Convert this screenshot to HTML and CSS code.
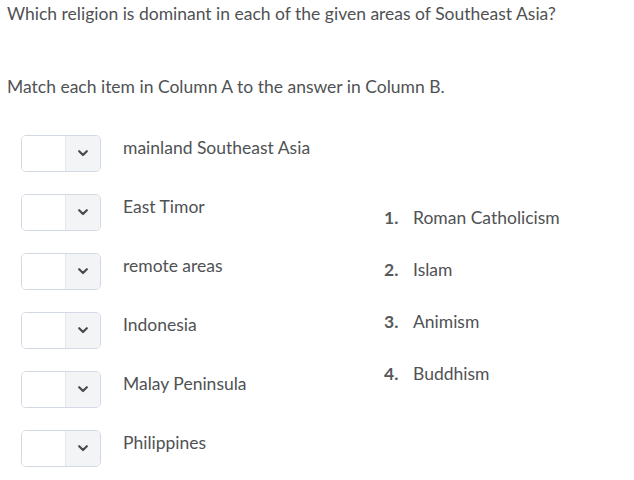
FILE: index.html
```html
<!DOCTYPE html>
<html>
<head>
<meta charset="utf-8">
<link rel="stylesheet" href="styles.css">
</head>
<body>
<div class="page">
  <p class="question">Which religion is dominant in each of the given areas of Southeast Asia?</p>
  <p class="instructions">Match each item in Column A to the answer in Column B.</p>
  <div class="match">
    <div class="col-a">
      <div class="row"><div class="select"><span class="value"></span><span class="arrow"><svg width="10" height="7" viewBox="0 0 10 7"><path d="M1.2 1.2 L5 5 L8.8 1.2" fill="none" stroke="#494c4e" stroke-width="2.2" stroke-linecap="round" stroke-linejoin="round"/></svg></span></div><span class="label">mainland Southeast Asia</span></div>
      <div class="row"><div class="select"><span class="value"></span><span class="arrow"><svg width="10" height="7" viewBox="0 0 10 7"><path d="M1.2 1.2 L5 5 L8.8 1.2" fill="none" stroke="#494c4e" stroke-width="2.2" stroke-linecap="round" stroke-linejoin="round"/></svg></span></div><span class="label">East Timor</span></div>
      <div class="row"><div class="select"><span class="value"></span><span class="arrow"><svg width="10" height="7" viewBox="0 0 10 7"><path d="M1.2 1.2 L5 5 L8.8 1.2" fill="none" stroke="#494c4e" stroke-width="2.2" stroke-linecap="round" stroke-linejoin="round"/></svg></span></div><span class="label">remote areas</span></div>
      <div class="row"><div class="select"><span class="value"></span><span class="arrow"><svg width="10" height="7" viewBox="0 0 10 7"><path d="M1.2 1.2 L5 5 L8.8 1.2" fill="none" stroke="#494c4e" stroke-width="2.2" stroke-linecap="round" stroke-linejoin="round"/></svg></span></div><span class="label">Indonesia</span></div>
      <div class="row"><div class="select"><span class="value"></span><span class="arrow"><svg width="10" height="7" viewBox="0 0 10 7"><path d="M1.2 1.2 L5 5 L8.8 1.2" fill="none" stroke="#494c4e" stroke-width="2.2" stroke-linecap="round" stroke-linejoin="round"/></svg></span></div><span class="label">Malay Peninsula</span></div>
      <div class="row"><div class="select"><span class="value"></span><span class="arrow"><svg width="10" height="7" viewBox="0 0 10 7"><path d="M1.2 1.2 L5 5 L8.8 1.2" fill="none" stroke="#494c4e" stroke-width="2.2" stroke-linecap="round" stroke-linejoin="round"/></svg></span></div><span class="label">Philippines</span></div>
    </div>
    <ol class="col-b">
      <li><span class="num">1.</span><span class="answer">Roman Catholicism</span></li>
      <li><span class="num">2.</span><span class="answer">Islam</span></li>
      <li><span class="num">3.</span><span class="answer">Animism</span></li>
      <li><span class="num">4.</span><span class="answer">Buddhism</span></li>
    </ol>
  </div>
</div>
</body>
</html>
```
FILE: styles.css
```css
html, body {
  margin: 0;
  padding: 0;
  background: #ffffff;
}
body {
  font-family: Lato, "Open Sans", sans-serif;
  font-size: 17.5px;
  color: #4f5254;
}
.page {
  padding: 3px 0 0 7px;
}
.question {
  margin: 0;
  line-height: 22px;
}
.instructions {
  margin: 51px 0 0 0;
  line-height: 21px;
}
.match {
  display: flex;
  align-items: flex-start;
  margin-top: 38px;
}
.col-a {
  display: flex;
  flex-direction: column;
  gap: 22px;
  padding-left: 14px;
  width: 363px;
}
.row {
  display: flex;
  align-items: flex-start;
  height: 37px;
}
.select {
  display: flex;
  width: 78px;
  height: 35px;
  border: 1px solid #d3d9e3;
  border-radius: 5px;
  overflow: hidden;
  flex-shrink: 0;
}
.value {
  width: 43px;
  background: #ffffff;
  border-right: 1px solid #e3e6ea;
}
.arrow {
  flex: 1;
  background: #f3f4f6;
  display: flex;
  align-items: center;
  justify-content: center;
}
.arrow svg {
  display: block;
}
.label {
  margin-left: 22px;
  padding-top: 2px;
  line-height: 21px;
}
.col-b {
  list-style: none;
  margin: 72px 0 0 0;
  padding: 0;
  display: flex;
  flex-direction: column;
  gap: 31px;
}
.col-b li {
  display: flex;
  line-height: 21px;
}
.num {
  width: 29px;
  font-weight: bold;
  color: #565a5c;
}
```
